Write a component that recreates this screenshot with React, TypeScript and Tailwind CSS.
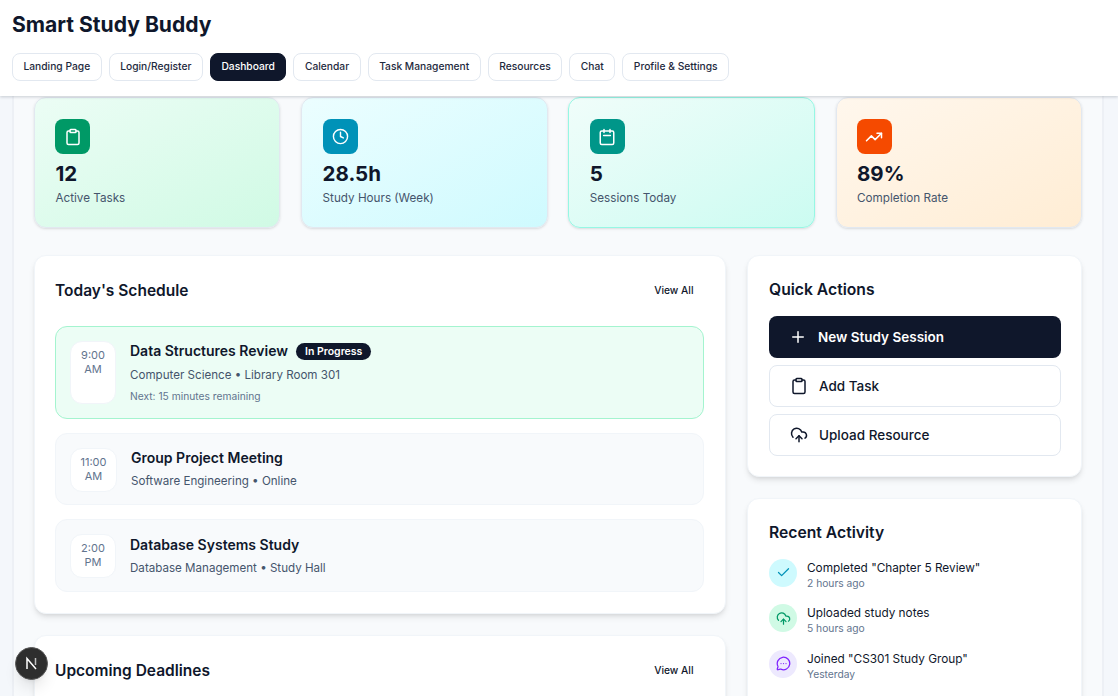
import React from 'react';
import { Check, Clipboard, Clock, CloudUpload, MessageCircleMore, Plus, TrendingUp } from 'lucide-react';

const navItems = ['Landing Page', 'Login/Register', 'Dashboard', 'Calendar', 'Task Management', 'Resources', 'Chat', 'Profile & Settings'];

// lucide's calendar has a full width bar, the picture has a short one
function CalendarIcon({ size }: { size: number }) {
    return (
        <svg width={size} height={size} viewBox="0 0 24 24" fill="none" stroke="currentColor" strokeWidth="2" strokeLinecap="round" strokeLinejoin="round">
            <rect x="3" y="4" width="18" height="18" rx="2" />
            <path d="M8 2v4M16 2v4M7.5 10h9" />
        </svg>
    );
}

const stats = [
    { value: '12', label: 'Active Tasks', icon: Clipboard, iconSize: 18, card: 'from-emerald-50 to-emerald-100 border-slate-200', tile: 'bg-emerald-600' },
    { value: '28.5h', label: 'Study Hours (Week)', icon: Clock, iconSize: 17, card: 'from-cyan-50 to-cyan-100 border-slate-200', tile: 'bg-cyan-600' },
    { value: '5', label: 'Sessions Today', icon: CalendarIcon, iconSize: 18, card: 'from-teal-50 to-teal-100 border-teal-200', tile: 'bg-teal-600' },
    { value: '89%', label: 'Completion Rate', icon: TrendingUp, iconSize: 18, card: 'from-orange-50 to-orange-100 border-slate-200', tile: 'bg-orange-600' },
];

const activity = [
    { text: 'Completed "Chapter 5 Review"', when: '2 hours ago', icon: Check, tone: 'bg-cyan-100 text-cyan-600' },
    { text: 'Uploaded study notes', when: '5 hours ago', icon: CloudUpload, tone: 'bg-emerald-100 text-emerald-600' },
    { text: 'Joined "CS301 Study Group"', when: 'Yesterday', icon: MessageCircleMore, tone: 'bg-violet-100 text-violet-600' },
];

function TimeBox({ hour, period, className }: { hour: string; period: string; className: string }) {
    return (
        <div className={`shrink-0 bg-white border border-slate-100 rounded-xl text-center text-[11px] leading-[14px] text-slate-500 pt-[6px] ${className}`}>
            <div>{hour}</div>
            <div>{period}</div>
        </div>
    );
}

function SectionHead({ title }: { title: string }) {
    return (
        <div className="flex items-center justify-between">
            <h2 className="text-[15.5px] leading-6 font-semibold text-slate-900">{title}</h2>
            <button className="text-[10.25px] font-medium text-slate-900 mr-[10px]">View All</button>
        </div>
    );
}

export default function App() {
    return (
        <div className="h-[696px] flex flex-col overflow-hidden bg-[#f4f7fb] font-['Inter',sans-serif]">
            {/* Header */}
            <header className="relative z-10 h-[96px] shrink-0 bg-white px-3 pt-[11px] shadow-[0_1px_3px_rgba(15,23,42,0.2)]">
                <h1 className="text-[21.1px] leading-[28px] font-bold text-slate-900">Smart Study Buddy</h1>
                <nav className="flex gap-[7px] mt-[14px]">
                    {navItems.map((item) => (
                        <button
                            key={item}
                            className={`h-[28px] px-[10.5px] rounded-lg border text-[10.25px] font-medium ${item === 'Dashboard' ? 'bg-slate-900 border-slate-900 text-white' : 'bg-white border-slate-200 text-slate-800'}`}
                        >
                            {item}
                        </button>
                    ))}
                </nav>
            </header>

            {/* Scrolled page */}
            <main className="flex-1 overflow-hidden pl-[12px] pr-[14px]">
                <div className="min-h-full bg-slate-50 border-x-2 border-[#edf0f5] px-[20px] pt-[1px]">
                    <div className="grid grid-cols-4 gap-[20.8px]">
                        {stats.map((s) => (
                            <div key={s.label} className={`h-[131px] rounded-xl border bg-gradient-to-br pl-[20.4px] pt-[21px] shadow-sm ${s.card}`}>
                                <div className={`size-[35px] rounded-lg flex items-center justify-center text-white ${s.tile}`}>
                                    <s.icon size={s.iconSize} />
                                </div>
                                <div className="mt-[6px] text-[20.5px] leading-[28px] font-bold text-slate-900">{s.value}</div>
                                <div className="mt-[1px] text-[11.7px] leading-[18px] text-slate-600">{s.label}</div>
                            </div>
                        ))}
                    </div>

                    <div className="grid grid-cols-[691.5px_1fr] gap-[21.5px] mt-[27px]">
                        <div className="flex flex-col gap-[21px]">
                            <section className="h-[359px] bg-white rounded-xl border border-slate-100 shadow-md pl-[20px] pr-[21px] pt-[23px]">
                                <SectionHead title="Today's Schedule" />
                                <div className="mt-[23px] flex flex-col gap-[14px]">
                                    <div className="h-[93px] flex gap-[14px] rounded-xl border border-emerald-200 bg-emerald-50 p-[14px]">
                                        <TimeBox hour="9:00" period="AM" className="w-[46px] h-[63px]" />
                                        <div>
                                            <div className="flex items-center gap-[8px]">
                                                <h3 className="text-sm leading-5 font-semibold text-slate-900">Data Structures Review</h3>
                                                <span className="h-[17px] px-[9px] rounded-full bg-slate-900 text-white text-[10.5px] leading-[17px] font-semibold">In Progress</span>
                                            </div>
                                            <p className="mt-[5px] text-[11.6px] leading-[18px] text-slate-600">Computer Science • Library Room 301</p>
                                            <p className="mt-[4px] text-[10.25px] leading-4 text-slate-500">Next: 15 minutes remaining</p>
                                        </div>
                                    </div>
                                    <div className="h-[72px] flex gap-[14px] rounded-xl border border-slate-100 bg-slate-50 p-[14px]">
                                        <TimeBox hour="11:00" period="AM" className="w-[47px] h-[44px]" />
                                        <div>
                                            <h3 className="text-sm leading-5 font-semibold text-slate-900">Group Project Meeting</h3>
                                            <p className="mt-[4px] text-[11.6px] leading-[18px] text-slate-600">Software Engineering • Online</p>
                                        </div>
                                    </div>
                                    <div className="h-[73px] flex gap-[14px] rounded-xl border border-slate-100 bg-slate-50 p-[14px]">
                                        <TimeBox hour="2:00" period="PM" className="w-[46px] h-[44px]" />
                                        <div className="pt-[1px]">
                                            <h3 className="text-sm leading-5 font-semibold text-slate-900">Database Systems Study</h3>
                                            <p className="mt-[4px] text-[11.6px] leading-[18px] text-slate-600">Database Management • Study Hall</p>
                                        </div>
                                    </div>
                                </div>
                            </section>
                            <section className="h-[200px] bg-white rounded-xl border border-slate-100 shadow-md pl-[20px] pr-[21px] pt-[23px]">
                                <SectionHead title="Upcoming Deadlines" />
                            </section>
                        </div>

                        <div className="flex flex-col gap-[21px]">
                            <section className="h-[222px] bg-white rounded-xl border border-slate-100 shadow-md pl-[21px] pr-[20px] pt-[23px]">
                                <h2 className="text-[15.7px] leading-[22px] font-semibold text-slate-900">Quick Actions</h2>
                                <div className="mt-[15px] flex flex-col gap-[7px]">
                                    <button className="h-[42px] flex items-center gap-[11px] px-[20px] rounded-lg bg-slate-900 text-white text-[13.5px] font-semibold">
                                        <Plus size={18} />
                                        New Study Session
                                    </button>
                                    <button className="h-[42px] flex items-center gap-[11px] px-[20px] rounded-lg border border-slate-200 bg-white text-slate-900 text-[13.5px] font-medium">
                                        <Clipboard size={18} />
                                        Add Task
                                    </button>
                                    <button className="h-[42px] flex items-center gap-[11px] px-[20px] rounded-lg border border-slate-200 bg-white text-slate-900 text-[13.5px] font-medium">
                                        <CloudUpload size={18} />
                                        Upload Resource
                                    </button>
                                </div>
                            </section>
                            <section className="h-[240px] bg-white rounded-xl border border-slate-100 shadow-md pl-[21px] pr-[20px] pt-[23px]">
                                <h2 className="text-[15.7px] leading-[22px] font-semibold text-slate-900">Recent Activity</h2>
                                <div className="mt-[14.8px] flex flex-col gap-[13.5px]">
                                    {activity.map((a) => (
                                        <div key={a.text} className="flex items-start gap-[10px]">
                                            <div className={`size-[28px] shrink-0 rounded-full flex items-center justify-center ${a.tone}`}>
                                                <a.icon size={15} />
                                            </div>
                                            <div className="pt-[1px]">
                                                <div className="text-[11.8px] leading-[16px] text-slate-900">{a.text}</div>
                                                <div className="text-[10.25px] leading-[15px] text-slate-500">{a.when}</div>
                                            </div>
                                        </div>
                                    ))}
                                </div>
                            </section>
                        </div>
                    </div>
                </div>
            </main>

            {/* Next.js dev badge */}
            <div className="fixed left-[15px] bottom-[16px] z-20 size-[33px] rounded-full bg-[#2e2e2e] border border-[#555] shadow-lg flex items-center justify-center">
                <svg width="15" height="15" viewBox="0 0 15 15" fill="none" stroke="#fff" strokeWidth="1.5">
                    <path d="M3 13V2.5L12 13" />
                    <path d="M11.5 2v7" strokeOpacity="0.7" />
                </svg>
            </div>
        </div>
    );
}
